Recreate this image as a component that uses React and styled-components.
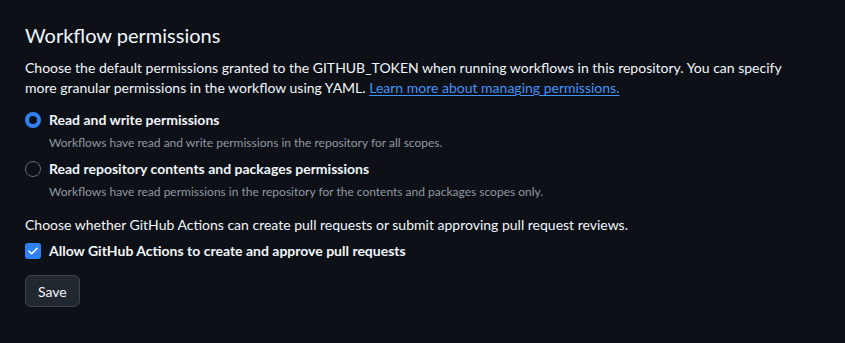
import React, { useState } from 'react';
import styled, { createGlobalStyle } from 'styled-components';

const GlobalStyle = createGlobalStyle`
  html, body {
    margin: 0;
    background: #0d1117;
  }
  body {
    font-family: Lato, "Liberation Sans", sans-serif;
    color: #f0f6fc;
  }
`;

const Page = styled.div`
  width: 845px;
  height: 343px;
  box-sizing: border-box;
  padding: 20px 50px 0 25px;
  background: #0d1117;
`;

const Title = styled.h2`
  margin: 0 0 8px;
  font-size: 20px;
  font-weight: 400;
  line-height: 30px;
  color: #f0f6fc;
`;

const Text = styled.p`
  margin: 0;
  font-size: 14px;
  line-height: 20px;
  color: #f0f6fc;
`;

const Link = styled.a`
  color: #4493f8;
  text-decoration: underline;
  text-underline-offset: 2px;
`;

const Options = styled.div`
  display: flex;
  flex-direction: column;
  gap: 7px;
  margin-top: 12px;
`;

const Option = styled.label`
  display: grid;
  grid-template-columns: 16px 1fr;
  column-gap: 8px;
  cursor: pointer;
`;

const Radio = styled.span`
  width: 16px;
  height: 16px;
  margin-top: 2px;
  box-sizing: border-box;
  border-radius: 50%;
  border: ${(p) => (p.checked ? '4px solid #2f81f7' : '1px solid #656c76')};
  background: #0d1117;
`;

const OptionLabel = styled.span`
  font-size: 14px;
  font-weight: 700;
  line-height: 20px;
  color: #f0f6fc;
`;

const Hint = styled.span`
  grid-column: 2;
  font-size: 12px;
  line-height: 18px;
  margin-top: 4px;
  color: #9198a1;
`;

const Section = styled.div`
  margin-top: 14px;
`;

const CheckRow = styled.label`
  display: flex;
  align-items: center;
  gap: 8px;
  margin-top: 6px;
  cursor: pointer;
`;

const Box = styled.span`
  width: 16px;
  height: 16px;
  border-radius: 3px;
  background: #2f81f7;
  display: flex;
  align-items: center;
  justify-content: center;
`;

const SaveButton = styled.button`
  margin-top: 14px;
  height: 32px;
  padding: 0 12px;
  border-radius: 6px;
  border: 1px solid #3d444d;
  background: #212830;
  color: #f0f6fc;
  font-family: inherit;
  font-size: 14px;
  font-weight: 400;
  cursor: pointer;
`;

const permissions = [
  {
    id: 'write',
    label: 'Read and write permissions',
    hint: 'Workflows have read and write permissions in the repository for all scopes.',
  },
  {
    id: 'read',
    label: 'Read repository contents and packages permissions',
    hint: 'Workflows have read permissions in the repository for the contents and packages scopes only.',
  },
];

export default function App() {
  const [choice, setChoice] = useState('write');

  return (
    <Page>
      <GlobalStyle />
      <Title>Workflow permissions</Title>
      <Text>
        Choose the default permissions granted to the GITHUB_TOKEN when running workflows in this
        repository. You can specify more granular permissions in the workflow using YAML.{' '}
        <Link href="#">Learn more about managing permissions.</Link>
      </Text>
      <Options>
        {permissions.map((p) => (
          <Option key={p.id} onClick={() => setChoice(p.id)}>
            <Radio checked={choice === p.id} />
            <OptionLabel>{p.label}</OptionLabel>
            <Hint>{p.hint}</Hint>
          </Option>
        ))}
      </Options>
      <Section>
        <Text>
          Choose whether GitHub Actions can create pull requests or submit approving pull request
          reviews.
        </Text>
        <CheckRow>
          <Box>
            <svg width="12" height="12" viewBox="0 0 12 12" fill="none">
              <path d="M2 6.2l2.6 2.6L10 3.4" stroke="#fff" strokeWidth="1.6" strokeLinecap="round" strokeLinejoin="round" />
            </svg>
          </Box>
          <OptionLabel>Allow GitHub Actions to create and approve pull requests</OptionLabel>
        </CheckRow>
      </Section>
      <SaveButton>Save</SaveButton>
    </Page>
  );
}
